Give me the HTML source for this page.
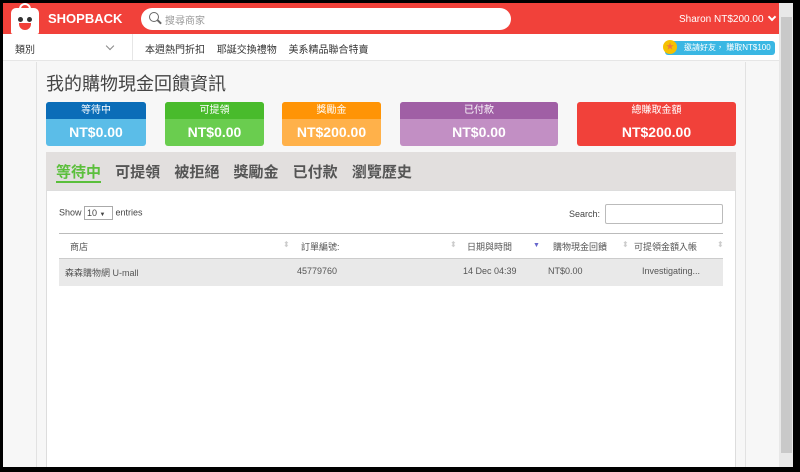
<!DOCTYPE html>
<html><head><meta charset="utf-8"><style>
*{margin:0;padding:0;box-sizing:border-box}
body{width:800px;height:472px;overflow:hidden;background:#000;font-family:"Liberation Sans","Noto Sans CJK TC",sans-serif;position:relative}
.abs{position:absolute}
#win{left:3px;top:3px;width:790px;height:464px;background:#f7f7f7;overflow:hidden}
</style></head><body>
<div id="win" class="abs">
 <div class="abs" style="left:0;top:0;width:776px;height:31px;background:#f1413a"></div>
 <div class="abs" style="left:8px;top:5px;width:28px;height:26px;background:#fff;border-radius:5px 5px 2px 2px"></div>
 <div class="abs" style="left:16px;top:0px;width:12px;height:8px;border:2px solid #fff;border-bottom:none;border-radius:6px 6px 0 0"></div>
 <div class="abs" style="left:15px;top:14px;width:5px;height:5px;background:#333;border-radius:50%"></div>
 <div class="abs" style="left:24px;top:14px;width:5px;height:5px;background:#333;border-radius:50%"></div>
 <div class="abs" style="left:16px;top:20px;width:12px;height:7px;background:#f1413a;border-radius:0 0 6px 6px"></div>
 <div class="abs" style="left:45px;top:8px;color:#fff;font-weight:bold;font-size:13px;letter-spacing:0px">SHOPBACK</div>
 <div class="abs" style="left:138px;top:5px;width:370px;height:22px;background:#fff;border-radius:11px"></div>
 <div class="abs" style="left:146px;top:9px;width:10px;height:10px;border:1.6px solid #666;border-radius:50%"></div>
 <div class="abs" style="left:154px;top:18px;width:5px;height:1.6px;background:#666;transform:rotate(45deg)"></div>
 <div class="abs" style="left:162px;top:9px;font-size:10px;color:#999">搜尋商家</div>
 <div class="abs" style="left:676px;top:11px;font-size:10px;color:#fff">Sharon NT$200.00</div>
 <div class="abs" style="left:766px;top:11px;width:6px;height:6px;border-right:2px solid #fff;border-bottom:2px solid #fff;transform:rotate(45deg)"></div>
 <div class="abs" style="left:0;top:31px;width:776px;height:27px;background:#fff;border-bottom:1px solid #e6e6e6"></div>
 <div class="abs" style="left:129px;top:31px;width:1px;height:27px;background:#e6e6e6"></div>
 <div class="abs" style="left:12px;top:38px;font-size:10px;color:#333">類別</div>
 <div class="abs" style="left:104px;top:40px;width:6px;height:6px;border-right:1px solid #888;border-bottom:1px solid #888;transform:rotate(45deg)"></div>
 <div class="abs" style="left:142px;top:38px;font-size:10px;color:#333;word-spacing:9px">本週熱門折扣 耶誕交換禮物 美系精品聯合特賣</div>
 <div class="abs" style="left:662px;top:38px;width:110px;height:14px;background:#3ab7e3;border-radius:3px"></div>
 <div class="abs" style="left:660px;top:37px;width:14px;height:14px;background:#f5c100;border-radius:50%;color:#e74;font-size:8px;text-align:center;line-height:14px">★</div>
 <div class="abs" style="left:681px;top:39px;font-size:8px;color:#fff">邀請好友， 賺取NT$100</div>
 <div class="abs" style="left:33px;top:59px;width:1px;height:410px;background:#e2e2e2"></div>
 <div class="abs" style="left:742px;top:59px;width:1px;height:410px;background:#e2e2e2"></div>
 <div class="abs" style="left:776px;top:0;width:14px;height:464px;background:#e8e8e8"></div>
 <div class="abs" style="left:778px;top:14px;width:11px;height:436px;background:#c9c9c9"></div>
 <div class="abs" style="left:43px;top:67px;font-size:18px;color:#444">我的購物現金回饋資訊</div>
 <div class="abs" style="left:43px;top:99px;width:100px;height:44px;background:#5bbde8;border-radius:3px;overflow:hidden;color:#fff;text-align:center"><div style="background:#0b6db8;height:17px;font-size:10px;line-height:17px">等待中</div><div style="font-weight:bold;font-size:14px;line-height:27px">NT$0.00</div></div>
 <div class="abs" style="left:162px;top:99px;width:99px;height:44px;background:#6acd4f;border-radius:3px;overflow:hidden;color:#fff;text-align:center"><div style="background:#49bb2c;height:17px;font-size:10px;line-height:17px">可提領</div><div style="font-weight:bold;font-size:14px;line-height:27px">NT$0.00</div></div>
 <div class="abs" style="left:279px;top:99px;width:99px;height:44px;background:#ffb14a;border-radius:3px;overflow:hidden;color:#fff;text-align:center"><div style="background:#ff9406;height:17px;font-size:10px;line-height:17px">獎勵金</div><div style="font-weight:bold;font-size:14px;line-height:27px">NT$200.00</div></div>
 <div class="abs" style="left:397px;top:99px;width:158px;height:44px;background:#c28fc4;border-radius:3px;overflow:hidden;color:#fff;text-align:center"><div style="background:#a05fa5;height:17px;font-size:10px;line-height:17px">已付款</div><div style="font-weight:bold;font-size:14px;line-height:27px">NT$0.00</div></div>
 <div class="abs" style="left:574px;top:99px;width:159px;height:44px;background:#f1413a;border-radius:3px;overflow:hidden;color:#fff;text-align:center"><div style="height:17px;font-size:10px;line-height:17px">總賺取金額</div><div style="font-weight:bold;font-size:14px;line-height:27px">NT$200.00</div></div>
 <div class="abs" style="left:43px;top:149px;width:690px;height:38px;background:#e2dfde"></div>
 <div class="abs" style="left:53px;top:158px;font-size:15px;font-weight:bold;color:#555;word-spacing:10px"><span style="color:#5bbf3b;border-bottom:2px solid #5bbf3b">等待中</span> 可提領 被拒絕 獎勵金 已付款 瀏覽歷史</div>
 <div class="abs" style="left:43px;top:187px;width:690px;height:290px;background:#fff;border:1px solid #ddd"></div>
 <div class="abs" style="left:56px;top:203px;font-size:9px;color:#444">Show <span style="display:inline-block;width:29px;height:14px;border:1px solid #aaa;vertical-align:middle;font-size:9px;line-height:12px;padding-left:2px">10 <span style="font-size:6px">▼</span></span> entries</div>
 <div class="abs" style="left:566px;top:206px;font-size:9px;color:#444">Search:</div>
 <div class="abs" style="left:602px;top:201px;width:118px;height:20px;border:1px solid #bbb;border-radius:2px"></div>
 <div class="abs" style="left:56px;top:230px;width:664px;height:1px;background:#bbb"></div>
 <div class="abs" style="left:56px;top:255px;width:664px;height:28px;background:#e9e9e9;border-top:1px solid #ccc"></div>
 <div class="abs" style="left:67px;top:237px;font-size:9px;color:#555">商店</div>
 <div class="abs" style="left:280px;top:237px;font-size:8px;color:#ccc">⬍</div>
 <div class="abs" style="left:298px;top:237px;font-size:9px;color:#555">訂單編號:</div>
 <div class="abs" style="left:447px;top:237px;font-size:8px;color:#ccc">⬍</div>
 <div class="abs" style="left:464px;top:237px;font-size:9px;color:#555">日期與時間</div>
 <div class="abs" style="left:530px;top:239px;font-size:7px;color:#66c">▼</div>
 <div class="abs" style="left:550px;top:237px;font-size:9px;color:#555">購物現金回饋</div>
 <div class="abs" style="left:619px;top:237px;font-size:8px;color:#ccc">⬍</div>
 <div class="abs" style="left:631px;top:237px;font-size:9px;color:#555">可提領金額入帳</div>
 <div class="abs" style="left:714px;top:237px;font-size:8px;color:#ccc">⬍</div>
 <div class="abs" style="left:62px;top:263px;font-size:9px;color:#555">森森購物網 U-mall</div>
 <div class="abs" style="left:294px;top:263px;font-size:9px;color:#555">45779760</div>
 <div class="abs" style="left:460px;top:263px;font-size:9px;color:#555">14 Dec 04:39</div>
 <div class="abs" style="left:545px;top:263px;font-size:9px;color:#555">NT$0.00</div>
 <div class="abs" style="left:639px;top:263px;font-size:9px;color:#555">Investigating...</div>
</div>
</body></html>
